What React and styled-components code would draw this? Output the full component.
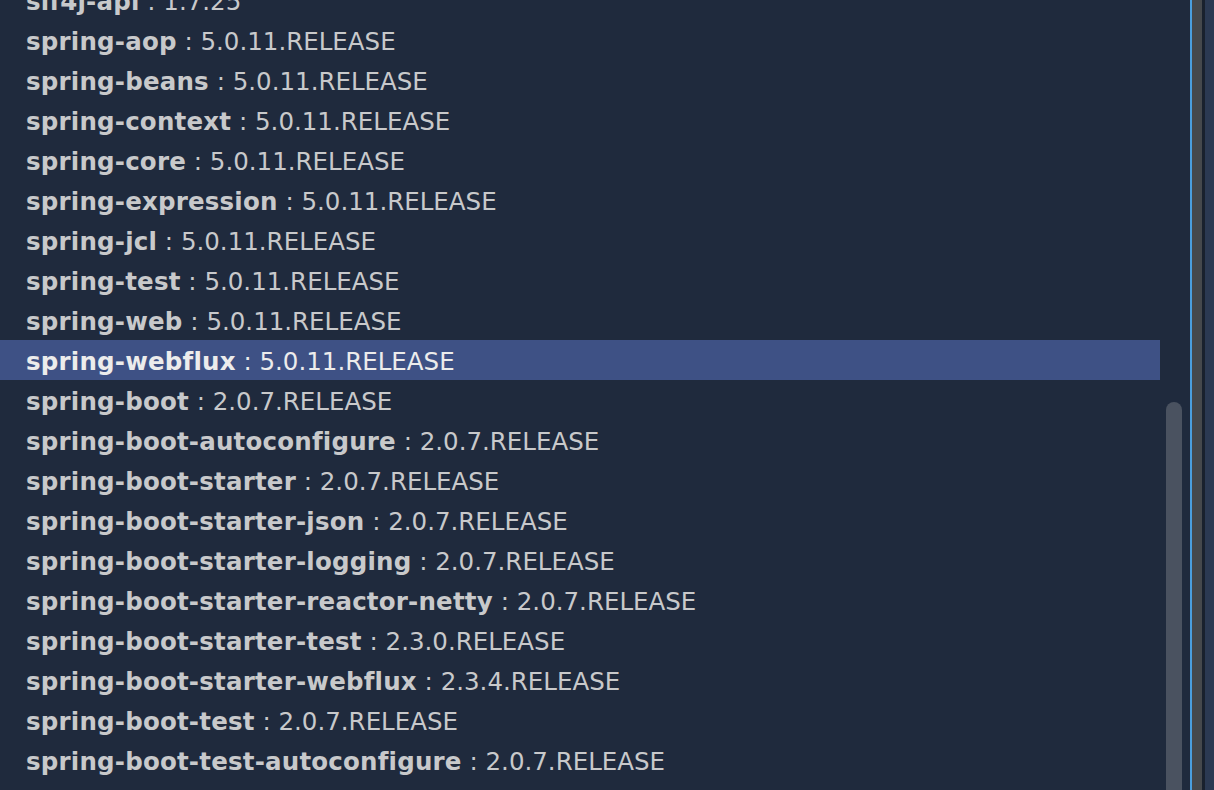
import React from "react"
import styled, { createGlobalStyle } from "styled-components"

const Global = createGlobalStyle`
    html, body {
        margin: 0;
        padding: 0;
        background: #1f2a3d;
        overflow: hidden;
    }
`

const Window = styled.div`
    display: flex;
    width: 1214px;
    height: 790px;
    overflow: hidden;
    background: #1f2a3d;
    font-family: "DejaVu Sans", "Liberation Sans", sans-serif;
`

const List = styled.ul`
    list-style: none;
    margin: -20px 0 0 0;
    padding: 0;
    width: 1160px;
    flex: none;
`

const Row = styled.li`
    display: flex;
    align-items: center;
    height: 40px;
    box-sizing: border-box;
    padding: 3px 0 0 26px;
    font-size: 24.5px;
    white-space: nowrap;
    color: ${p => (p.selected ? "#ececec" : "#c8c9cb")};
    background: ${p => (p.selected ? "#3e5185" : "transparent")};
`

const Name = styled.span`
    font-weight: bold;
    letter-spacing: 0.2px;
`

const Version = styled.span`
    white-space: pre;
`

const Gutter = styled.div`
    display: flex;
    flex-direction: column;
    width: 30px;
    flex: none;
    padding: 402px 8px 0 6px;
    box-sizing: border-box;
`

const Thumb = styled.div`
    flex: 1;
    background: #4a5260;
    border-radius: 8px 8px 0 0;
`

const Edge = styled.div`
    width: ${p => p.w}px;
    flex: none;
    background: ${p => p.c};
`

const deps = [
    ["slf4j-api", "1.7.25"],
    ["spring-aop", "5.0.11.RELEASE"],
    ["spring-beans", "5.0.11.RELEASE"],
    ["spring-context", "5.0.11.RELEASE"],
    ["spring-core", "5.0.11.RELEASE"],
    ["spring-expression", "5.0.11.RELEASE"],
    ["spring-jcl", "5.0.11.RELEASE"],
    ["spring-test", "5.0.11.RELEASE"],
    ["spring-web", "5.0.11.RELEASE"],
    ["spring-webflux", "5.0.11.RELEASE"],
    ["spring-boot", "2.0.7.RELEASE"],
    ["spring-boot-autoconfigure", "2.0.7.RELEASE"],
    ["spring-boot-starter", "2.0.7.RELEASE"],
    ["spring-boot-starter-json", "2.0.7.RELEASE"],
    ["spring-boot-starter-logging", "2.0.7.RELEASE"],
    ["spring-boot-starter-reactor-netty", "2.0.7.RELEASE"],
    ["spring-boot-starter-test", "2.3.0.RELEASE"],
    ["spring-boot-starter-webflux", "2.3.4.RELEASE"],
    ["spring-boot-test", "2.0.7.RELEASE"],
    ["spring-boot-test-autoconfigure", "2.0.7.RELEASE"],
    ["spring-data-commons", "2.0.12.RELEASE"],
]

export default function App() {
    return (
        <>
            <Global />
            <Window>
                <List>
                    {deps.map(([name, version]) => (
                        <Row key={name} selected={name === "spring-webflux"}>
                            <Name>{name}</Name>
                            <Version>{" : " + version}</Version>
                        </Row>
                    ))}
                </List>
                <Gutter>
                    <Thumb />
                </Gutter>
                <Edge w={2} c="#4a9ede" />
                <Edge w={10} c="#45484c" />
                <Edge w={3} c="#19212e" />
                <Edge w={9} c="#2b3952" />
            </Window>
        </>
    )
}
